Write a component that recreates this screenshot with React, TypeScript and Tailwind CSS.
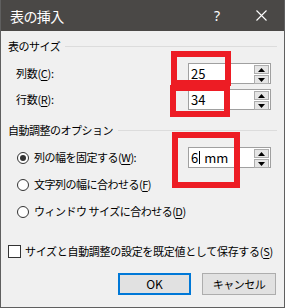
import type { ReactNode } from 'react';

const font = { fontFamily: '"Noto Sans CJK JP", "Noto Sans", sans-serif' };

const Spinner = () => (
  <div className="absolute right-[1px] top-[1px] flex w-[15px] flex-col gap-[1px]">
    {[0, 1].map((i) => (
      <div
        key={i}
        className="flex h-[9px] items-center justify-center border border-[#adadad] bg-[#e5e5e5]"
      >
        <svg width="7" height="4" viewBox="0 0 7 4">
          <polygon points={i === 0 ? '0,4 7,4 3.5,0' : '0,0 7,0 3.5,4'} fill="#000" />
        </svg>
      </div>
    ))}
  </div>
);

const SpinInput = ({ children }: { children: ReactNode }) => (
  <div className="relative ml-auto mr-[6px] flex h-[21px] w-[83px] items-center border border-[#a0a0a0] bg-white pl-[2px] text-[13px] leading-none text-black">
    {children}
    <Spinner />
  </div>
);

const U = ({ children }: { children: ReactNode }) => <span className="underline underline-offset-2">{children}</span>;

const GroupHeader = ({ label, mt }: { label: string; mt: string }) => (
  <div className={`flex h-[14px] items-center ${mt}`}>
    <span className="text-[11px] leading-none tracking-[-0.5px]">{label}</span>
    <div className="ml-[5px] h-px flex-1 bg-[#dcdcdc]" />
  </div>
);

const Radio = ({ checked, children }: { checked?: boolean; children: ReactNode }) => (
  <div className="flex items-center pl-[9px]">
    <div className="flex h-[12px] w-[12px] items-center justify-center rounded-full border border-[#333] bg-white">
      {checked && <div className="h-[6px] w-[6px] rounded-full bg-[#333]" />}
    </div>
    <span className="ml-[5px] text-[11px] leading-none tracking-[-0.5px]">{children}</span>
  </div>
);

const RedBox = ({ cls }: { cls: string }) => (
  <div className={`pointer-events-none absolute border-[6px] border-[#ed1c24] ${cls}`} />
);

export default function App() {
  return (
    <div
      className="relative h-[308px] w-[285px] overflow-hidden border-x border-b border-[#5f5f5f] bg-[#f0f0f0] text-black"
      style={font}
    >
      {/* title bar */}
      <div className="-mx-px flex h-[31px] items-center bg-[#4a4846] pl-[10px] text-white">
        <span className="text-[14px] leading-none tracking-[-0.6px]">表の挿入</span>
        <span className="ml-auto text-[14px] leading-none" style={{ fontFamily: '"Noto Sans", sans-serif' }}>?</span>
        <svg className="ml-[36px] mr-[18px]" width="11" height="11" viewBox="0 0 11 11">
          <path d="M0.5 0.5 L10.5 10.5 M10.5 0.5 L0.5 10.5" stroke="#fff" strokeWidth="1.1" />
        </svg>
      </div>

      <div className="flex flex-col px-[7px]">
        <GroupHeader label="表のサイズ" mt="mt-[8px]" />

        <div className="mt-[10px] flex h-[21px] items-center">
          <span className="pl-[8px] text-[11px] leading-none tracking-[-0.3px]">
            列数(<U>C</U>):
          </span>
          <SpinInput>25</SpinInput>
        </div>
        <div className="mt-[5px] flex h-[21px] items-center">
          <span className="pl-[8px] text-[11px] leading-none tracking-[-0.3px]">
            行数(<U>R</U>):
          </span>
          <SpinInput>34</SpinInput>
        </div>

        <GroupHeader label="自動調整のオプション" mt="mt-[13px]" />

        <div className="mt-[10px] flex h-[21px] items-center">
          <Radio checked>
            列の幅を固定する(<U>W</U>):
          </Radio>
          <SpinInput>
            <span>6</span>
            <span className="ml-[1px] h-[13px] w-px bg-black" />
            <span className="ml-[4px]">mm</span>
          </SpinInput>
        </div>
        <div className="mt-[6px] flex h-[21px] items-center">
          <Radio>
            文字列の幅に合わせる(<U>F</U>)
          </Radio>
        </div>
        <div className="mt-[6px] flex h-[21px] items-center">
          <Radio>
            ウィンドウ サイズに合わせる(<U>D</U>)
          </Radio>
        </div>

        <div className="mt-[22px] flex h-[14px] items-center">
          <div className="h-[13px] w-[13px] border border-[#333] bg-white" />
          <span className="ml-[4px] whitespace-nowrap text-[11px] leading-none tracking-[-0.3px]">
            サイズと自動調整の設定を既定値として保存する(<U>S</U>)
          </span>
        </div>

        <div className="mt-[15px] flex justify-end gap-[11px] pr-[1px]">
          <button className="flex h-[22px] w-[73px] items-center justify-center border-2 border-[#0078d7] bg-[#e1e1e1] text-[12px] leading-none">
            OK
          </button>
          <button className="flex h-[22px] w-[74px] items-center justify-center border border-[#adadad] bg-[#e1e1e1] text-[11px] leading-none tracking-[-0.5px]">
            キャンセル
          </button>
        </div>
      </div>

      <RedBox cls="left-[170px] top-[51px] h-[35px] w-[60px]" />
      <RedBox cls="left-[169px] top-[85px] h-[32px] w-[60px]" />
      <RedBox cls="left-[171px] top-[132px] h-[56px] w-[68px]" />
    </div>
  );
}
